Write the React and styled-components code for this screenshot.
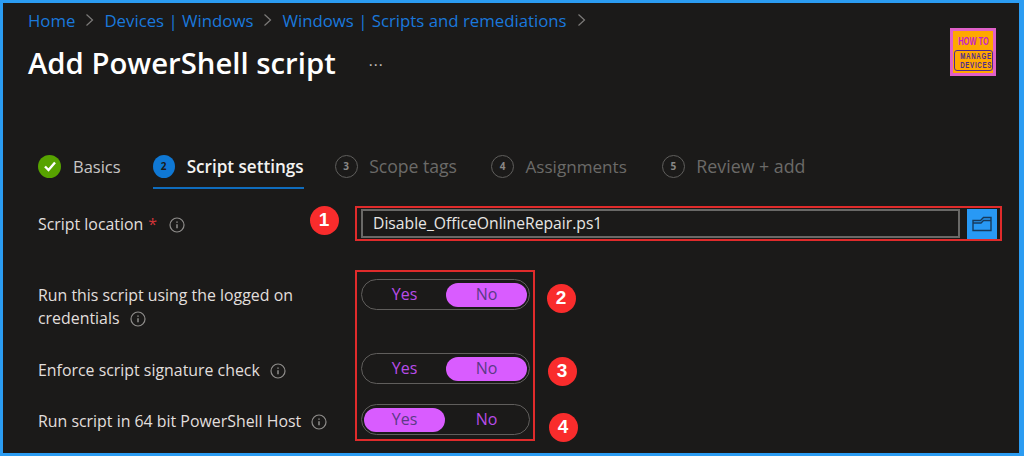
import React from "react";
import styled, {createGlobalStyle} from "styled-components";

const FONT = `"Open Sans", "Noto Sans", "Liberation Sans", sans-serif`;

const GlobalStyle = createGlobalStyle`
  html, body {
    margin: 0;
    padding: 0;
    background: #1b1a19;
  }
  * {
    box-sizing: border-box;
  }
`;

const Page = styled.div`
  position: relative;
  width: 1024px;
  height: 456px;
  overflow: hidden;
  background: #1b1a19;
  border-style: solid;
  border-color: #2b9cf2;
  border-width: 3px 5px 3px 3px;
  font-family: ${FONT};
`;

const Header = styled.header`
  display: flex;
  justify-content: space-between;
  align-items: flex-start;
  height: 100px;
  padding: 6px 25px 0 25px;
`;

const Crumbs = styled.nav`
  display: flex;
  align-items: center;
  height: 22px;
  font-size: 16.8px;
  color: #1a78dc;
`;

const Crumb = styled.span`
  white-space: nowrap;
`;

const CrumbArrow = styled.svg`
  width: 9px;
  height: 14px;
  margin: 0 10px;
  fill: none;
  stroke: #7d7b79;
  stroke-width: 1.2;
`;

const TitleRow = styled.div`
  display: flex;
  align-items: center;
  margin-top: 11px;
`;

const Title = styled.h1`
  margin: 0;
  font-size: 29.3px;
  line-height: 42px;
  font-weight: 600;
  color: #ffffff;
  white-space: nowrap;
`;

const More = styled.span`
  margin: -6px 0 0 33px;
  font-size: 15px;
  letter-spacing: 1px;
  line-height: 22px;
  color: #c8c6c4;
`;

const Logo = styled.div`
  display: flex;
  flex-direction: column;
  align-items: center;
  width: 46px;
  height: 48px;
  margin: 19px -2px 0 0;
  padding-top: 5px;
  background: #ffa800;
  border: 3px solid #e060c8;
  font-family: "Liberation Sans", sans-serif;
  font-weight: 700;
`;

const LogoTop = styled.span`
  font-size: 11px;
  line-height: 11px;
  color: #c81ecb;
  white-space: nowrap;
  transform: scaleX(0.68);
`;

const LogoBox = styled.span`
  display: block;
  width: 39px;
  flex: none;
  margin-top: 3px;
  padding: 1px 0;
  border: 1px solid #4d2a90;
  border-radius: 3px;
  font-size: 8.5px;
  line-height: 8.5px;
  text-align: center;
  color: #4d2a90;
  white-space: nowrap;
  overflow: hidden;
`;

const LogoWord = styled.span`
  display: block;
  transform: scaleX(0.72);
  letter-spacing: 1px;
`;

const Tabs = styled.div`
  display: flex;
  height: 46px;
  padding-left: 35px;
  margin-top: 42px;
`;

const Tab = styled.div`
  display: flex;
  align-items: center;
  gap: ${p => (p.$muted ? 11.5 : 12)}px;
  height: 44px;
  margin-right: ${p => p.$gap}px;
  font-size: ${p => p.$size}px;
  font-weight: ${p => (p.$active ? 600 : 400)};
  color: ${p => (p.$muted ? "#6b6a68" : p.$active ? "#f3f2f1" : "#c8c6c4")};
  border-bottom: 2px solid ${p => (p.$active ? "#0f6cbd" : "transparent")};
  white-space: nowrap;
`;

const StepCircle = styled.span`
  display: flex;
  align-items: center;
  justify-content: center;
  width: ${p => (p.$active ? 22 : 23)}px;
  height: 23px;
  border-radius: 50%;
  font-size: 10px;
  font-weight: 700;
  color: ${p => (p.$active ? "#1b1a19" : "#8a8886")};
  background: ${p => (p.$active ? "#0f78d4" : p.$done ? "#57a300" : "transparent")};
  border: ${p => (p.$active || p.$done ? "none" : "1.5px solid #5f5e5c")};
`;

const Form = styled.div`
  padding-left: 35px;
`;

const Row = styled.div`
  display: grid;
  grid-template-columns: 323px 1fr;
  align-items: ${p => p.$align || "center"};
  height: ${p => p.$h}px;
  margin-top: ${p => p.$top}px;
`;

const Label = styled.div`
  padding-top: ${p => p.$top || 0}px;
  font-size: 15.9px;
  line-height: 23px;
  color: #e1dfdd;
`;

const Required = styled.span`
  margin: 0 2px 0 5px;
  color: #d13438;
`;

const InfoIcon = styled.svg`
  display: inline-block;
  vertical-align: -3px;
  width: 16px;
  height: 16px;
  margin-left: 10px;
  fill: none;
  stroke: #8f8d8b;
`;

const FileField = styled.div`
  display: flex;
  gap: 7px;
  width: 636px;
`;

const FileInput = styled.div`
  flex: 1;
  height: 29px;
  padding-left: 10px;
  border: 2px solid #6a6967;
  font-size: 15.7px;
  line-height: 24px;
  color: #e8e6e4;
`;

const BrowseButton = styled.div`
  display: flex;
  align-items: center;
  justify-content: center;
  width: 30px;
  height: 30px;
  background: #2899f5;
`;

const Toggle = styled.div`
  display: grid;
  grid-template-columns: 81px 81px;
  justify-content: space-between;
  align-items: center;
  width: 169px;
  height: 31px;
  padding: 0 2px;
  border: 1.5px solid #605e5c;
  border-radius: 16px;
`;

const ToggleOption = styled.span`
  height: 24px;
  border-radius: 12px;
  font-size: 16px;
  line-height: 22px;
  text-align: center;
  background: ${p => (p.$on ? "#d95cff" : "transparent")};
  color: ${p => (p.$on ? "#5b3a86" : "#b84ce8")};
`;

const RedBox = styled.div`
  position: absolute;
  left: ${p => p.$x}px;
  top: ${p => p.$y}px;
  width: ${p => p.$w}px;
  height: ${p => p.$h}px;
  border: 2px solid #e02b2b;
  pointer-events: none;
`;

const Badge = styled.span`
  position: absolute;
  left: ${p => p.$x - 14.5}px;
  top: ${p => p.$y - 14.5}px;
  display: flex;
  align-items: center;
  justify-content: center;
  width: 29px;
  height: 29px;
  border-radius: 50%;
  background: #f92c2c;
  color: #ffffff;
  font-family: "Liberation Sans", sans-serif;
  font-size: 19px;
  font-weight: 700;
`;

function Info() {
    return (
        <InfoIcon viewBox="0 0 16 16">
            <circle cx="8" cy="8" r="7" strokeWidth="1.2"/>
            <path d="M8 7.2v4M8 4.4v1.3" strokeWidth="1.5"/>
        </InfoIcon>
    );
}

function Arrow() {
    return (
        <CrumbArrow viewBox="0 0 9 14">
            <path d="M1.5 1.5 7.5 7l-6 5.5"/>
        </CrumbArrow>
    );
}

function YesNo({value}) {
    return (
        <Toggle>
            <ToggleOption $on={value === "yes"}>Yes</ToggleOption>
            <ToggleOption $on={value === "no"}>No</ToggleOption>
        </Toggle>
    );
}

function App() {
    return (
        <Page>
            <GlobalStyle/>
            <Header>
                <div>
                    <Crumbs>
                        <Crumb>Home</Crumb>
                        <Arrow/>
                        <Crumb>Devices | Windows</Crumb>
                        <Arrow/>
                        <Crumb>Windows | Scripts and remediations</Crumb>
                        <Arrow/>
                    </Crumbs>
                    <TitleRow>
                        <Title>Add PowerShell script</Title>
                        <More>...</More>
                    </TitleRow>
                </div>
                <Logo>
                    <LogoTop>HOW TO</LogoTop>
                    <LogoBox>
                        <LogoWord>MANAGE</LogoWord>
                        <LogoWord>DEVICES</LogoWord>
                    </LogoBox>
                </Logo>
            </Header>

            <Tabs>
                <Tab $gap={32} $size={16.5}>
                    <StepCircle $done>
                        <svg width="14" height="14" viewBox="0 0 14 14" fill="none" stroke="#fff" strokeWidth="2.4">
                            <path d="M2 7.500 5.500 11 12 3.500"/>
                        </svg>
                    </StepCircle>
                    Basics
                </Tab>
                <Tab $gap={31} $size={17.1} $active><StepCircle $active>2</StepCircle>Script settings</Tab>
                <Tab $gap={34} $size={17.6} $muted><StepCircle>3</StepCircle>Scope tags</Tab>
                <Tab $gap={35} $size={17.1} $muted><StepCircle>4</StepCircle>Assignments</Tab>
                <Tab $gap={0} $size={17.8} $muted><StepCircle>5</StepCircle>Review + add</Tab>
            </Tabs>

            <Form>
                <Row $h={30} $top={18}>
                    <Label>Script location<Required>*</Required><Info/></Label>
                    <FileField>
                        <FileInput>Disable_OfficeOnlineRepair.ps1</FileInput>
                        <BrowseButton>
                            <svg width="20" height="16" viewBox="0 0 20 16" fill="none" stroke="#173a5c" strokeWidth="1.4">
                                <path d="M1 4.500h7.500l3-3h7.500v13H1z"/>
                                <path d="M1 7h8l2.500-2.500h7.500"/>
                            </svg>
                        </BrowseButton>
                    </FileField>
                </Row>
                <Row $h={48} $top={40} $align="start">
                    <Label $top={5}>Run this script using the logged on<br/>credentials<Info/></Label>
                    <YesNo value="no"/>
                </Row>
                <Row $h={31} $top={26}>
                    <Label $top={4}>Enforce script signature check<Info/></Label>
                    <YesNo value="no"/>
                </Row>
                <Row $h={31} $top={20}>
                    <Label $top={4}>Run script in 64 bit PowerShell Host<Info/></Label>
                    <YesNo value="yes"/>
                </Row>
            </Form>

            <RedBox $x={352} $y={203} $w={647} $h={35}/>
            <RedBox $x={352} $y={267} $w={180} $h={171}/>
            <Badge $x={321} $y={217}>1</Badge>
            <Badge $x={558} $y={295}>2</Badge>
            <Badge $x={559} $y={368}>3</Badge>
            <Badge $x={560} $y={424}>4</Badge>
        </Page>
    );
}

export default App;
